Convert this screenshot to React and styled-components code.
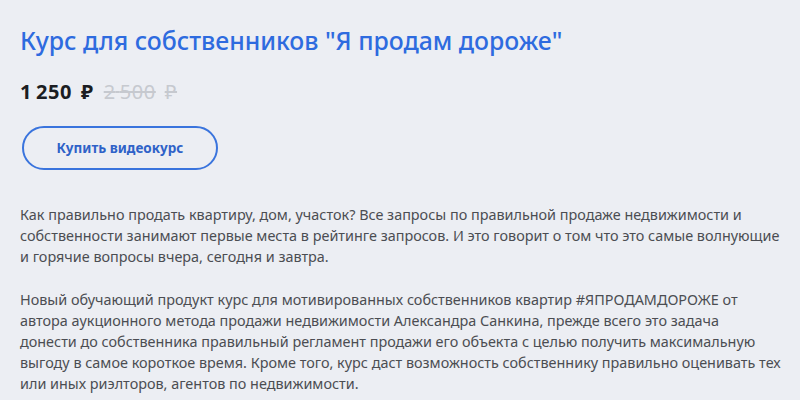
import React from "react";
import styled, { createGlobalStyle } from "styled-components";

const Global = createGlobalStyle`
  * { box-sizing: border-box; margin: 0; padding: 0; }
  body {
    background: #eceef3;
    font-family: "Noto Sans", "Open Sans", sans-serif;
  }
`;

const Page = styled.div`
  width: 800px;
  height: 400px;
  overflow: hidden;
  padding: 24px 12px 0 20px;
`;

const Title = styled.h1`
  font-size: 24.8px;
  font-weight: 500;
  color: #2e6bdf;
  line-height: 32px;
`;

const PriceRow = styled.div`
  display: flex;
  align-items: baseline;
  gap: 10px;
  margin-top: 22px;
`;

const Price = styled.span`
  font-size: 20px;
  font-weight: ${(p) => (p.old ? 400 : 700)};
  color: ${(p) => (p.old ? "#c6c9cf" : "#1b1d22")};
  letter-spacing: 0.6px;
  text-decoration: ${(p) => (p.old ? "line-through" : "none")};
  white-space: nowrap;
`;

const Currency = styled.span`
  margin-left: 9px;
`;

const BuyButton = styled.button`
  margin: 21px 0 0 2px;
  width: 196px;
  height: 44px;
  border: 2px solid #3a74dd;
  border-radius: 22px;
  background: transparent;
  color: #2f62c8;
  font-family: inherit;
  font-size: 13.5px;
  font-weight: 700;
`;

const Text = styled.p`
  margin-top: ${(p) => p.gap}px;
  font-size: 14.4px;
  line-height: 21px;
  color: #4b4d52;
`;

const Line = styled.span`
  display: block;
  white-space: nowrap;
`;

const intro = [
  "Как правильно продать квартиру, дом, участок? Все запросы по правильной продаже недвижимости и",
  "собственности занимают первые места в рейтинге запросов. И это говорит о том что это самые волнующие",
  "и горячие вопросы вчера, сегодня и завтра.",
];

const about = [
  "Новый обучающий продукт курс для мотивированных собственников квартир #ЯПРОДАМДОРОЖЕ от",
  "автора аукционного метода продажи недвижимости Александра Санкина, прежде всего это задача",
  "донести до собственника правильный регламент продажи его объекта с целью получить максимальную",
  "выгоду в самое короткое время. Кроме того, курс даст возможность собственнику правильно оценивать тех",
  "или иных риэлторов, агентов по недвижимости.",
];

export default function App() {
  return (
    <Page>
      <Global />
      <Title>Курс для собственников "Я продам дороже"</Title>
      <PriceRow>
        <Price>
          1{"\u2009"}250<Currency>₽</Currency>
        </Price>
        <Price old>
          2{"\u2009"}500<Currency>₽</Currency>
        </Price>
      </PriceRow>
      <BuyButton>Купить видеокурс</BuyButton>
      <Text gap={34}>
        {intro.map((l) => (
          <Line key={l}>{l}</Line>
        ))}
      </Text>
      <Text gap={22}>
        {about.map((l) => (
          <Line key={l}>{l}</Line>
        ))}
      </Text>
    </Page>
  );
}
